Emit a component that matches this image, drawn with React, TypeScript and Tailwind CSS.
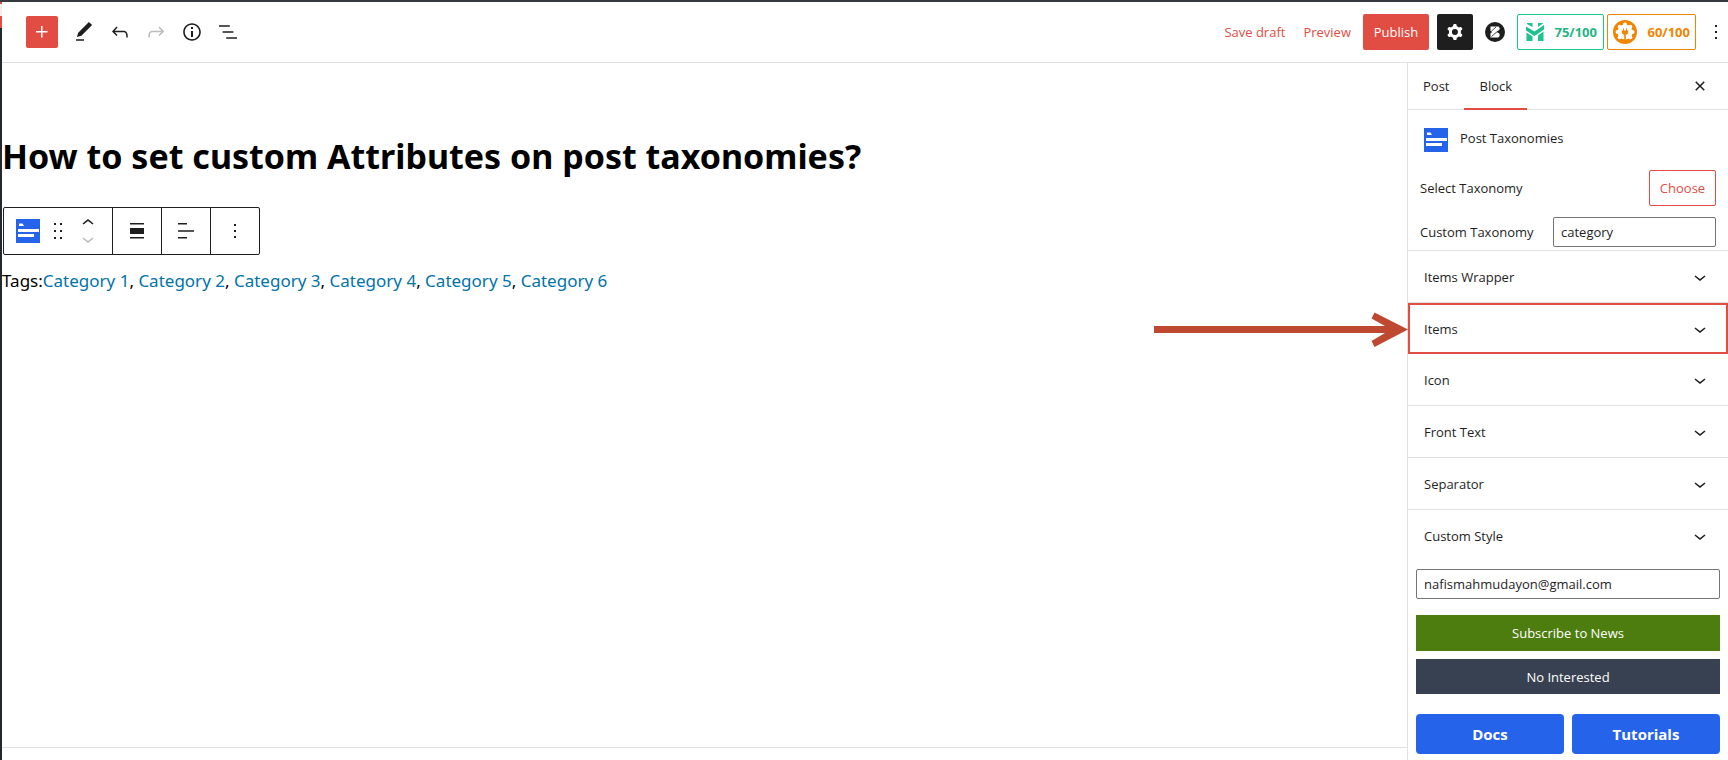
import React from 'react';

type IconProps = { d: string; className?: string };

const Icon = ({ d, className = 'size-6' }: IconProps) => (
  <svg viewBox="0 0 24 24" fill="currentColor" fillRule="evenodd" aria-hidden="true" className={`shrink-0 ${className}`}>
    <path d={d} />
  </svg>
);

const ICONS = {
  plus: 'M11 12.5V17.5H12.5V12.5H17.5V11H12.5V6H11V11H6V12.5H11Z',
  edit: 'M20.1 5.1L16.9 2 6.2 12.7l-1.3 4.4 4.5-1.3L20.1 5.1zM4 20.8h8v-1.5H4v1.5z',
  undo: 'M18.3 11.7c-.6-.6-1.4-.9-2.3-.9H6.7l2.9-3.3-1.1-1-4.5 5L8.5 16l1-1-2.7-2.7H16c.5 0 .9.2 1.3.5 1 1 1 3.4 1 4.5v.3h1.5v-.2c0-1.5 0-4.3-1.5-5.7z',
  redo: 'M15.6 6.5l-1.1 1 2.9 3.3H8c-.9 0-1.7.3-2.3.9-1.4 1.5-1.4 4.2-1.4 5.6v.2h1.5v-.3c0-1.1 0-3.5 1-4.5.3-.3.7-.5 1.3-.5h9.2L14.5 15l1.1 1.1 4.6-4.6-4.6-5z',
  info: 'M12 3.2c-4.8 0-8.8 3.9-8.8 8.8 0 4.8 3.9 8.8 8.8 8.8 4.8 0 8.8-3.9 8.8-8.8 0-4.8-4-8.8-8.8-8.8zm0 16c-4 0-7.2-3.3-7.2-7.2C4.8 8 8 4.8 12 4.8s7.2 3.3 7.2 7.2c0 4-3.2 7.2-7.2 7.2zM11 17h2v-6h-2v6zm0-8h2V7h-2v2z',
  list: 'M13.8 5.2H3v1.5h10.8V5.2zm-3.6 12v1.5H21v-1.5H10.2zm7.2-6H6.6v1.5h10.8v-1.5z',
  close: 'M12 13.06l3.712 3.713 1.061-1.06L13.061 12l3.712-3.712-1.06-1.06L12 10.938 8.288 7.227l-1.061 1.06L10.939 12l-3.712 3.712 1.06 1.061L12 13.061z',
  down: 'M17.5 11.6L12 16l-5.5-4.4.9-1.2L12 14l4.5-3.6 1 1.2z',
  up: 'M6.5 12.4L12 8l5.5 4.4-.9 1.2L12 10l-4.5 3.6-1-1.2z',
  drag: 'M8 6h2V4H8v2zm0 7h2v-2H8v2zm0 7h2v-2H8v2zm6-16v2h2V4h-2zm0 9h2v-2h-2v2zm0 7h2v-2h-2v2z',
  more: 'M13 19h-2v-2h2v2zm0-6h-2v-2h2v2zm0-6h-2V5h2v2z',
  width: 'M5 4h14v1.500H5zM5 9h14v6H5zM5 18h14v1.500H5z',
  align: 'M4 4h9v1.500H4zM4 11.200h16v1.500H4zM4 18h9v1.500H4z',
  cog: 'M10.289 4.836A1 1 0 0111.275 4h1.306a1 1 0 01.987.836l.244 1.466c.787.26 1.503.679 2.108 1.218l1.393-.522a1 1 0 011.216.437l.653 1.13a1 1 0 01-.23 1.273l-1.148.944a6.025 6.025 0 010 2.435l1.149.946a1 1 0 01.23 1.272l-.653 1.13a1 1 0 01-1.216.437l-1.394-.522c-.605.54-1.32.958-2.108 1.218l-.244 1.466a1 1 0 01-.987.836h-1.306a1 1 0 01-.986-.836l-.244-1.466a5.995 5.995 0 01-2.108-1.218l-1.394.522a1 1 0 01-1.217-.436l-.653-1.131a1 1 0 01.23-1.272l1.149-.946a6.026 6.026 0 010-2.435l-1.148-.944a1 1 0 01-.23-1.272l.653-1.131a1 1 0 011.217-.437l1.393.522a5.994 5.994 0 012.108-1.218l.244-1.466zM14.929 12a3 3 0 11-6 0 3 3 0 016 0z',
};

const BlockIcon = () => (
  <svg viewBox="0 0 24 24" aria-hidden="true" className="size-6 shrink-0">
    <path fill="#2563eb" d="M0 0h24v24H0z" />
    <path fill="#fff" d="M3 4.500h3.500L8 7H3zM2 10h21v3H2zM2 15h16v3H2z" />
  </svg>
);

const BuilderLogo = () => (
  <svg viewBox="0 0 20 20" aria-hidden="true" className="size-5 shrink-0">
    <circle cx="10" cy="10" r="10" fill="#1e1e1e" />
    <path fill="#fff" d="M5.500 4.500h7c2 0 2.800 2.200 1.600 3.700L11.800 10l2.400 1.400c1.200 1.700.2 4.100-2 4.100H5.500v-4.300L7.200 10 5.500 8.800z" />
    <path stroke="#1e1e1e" strokeWidth=".8" d="M6.500 9l4.500-4M6.500 14.500l7-6" />
  </svg>
);

const ScoreLogo = () => (
  <svg viewBox="0 0 18 18" fill="#1fc28a" aria-hidden="true" className="size-[18px] shrink-0">
    <path d="M1 0h5.500v4L1 1zM0 3.500l8.500 5L18 2v4.500L8.500 13 0 7.500zM.5 9.500l6 4V18h-6zM12 12.500l5.500-4V18H12zM12 0h5.500l-5.500 4z" />
  </svg>
);

const PlugLogo = () => (
  <svg viewBox="0 0 24 24" aria-hidden="true" className="size-6 shrink-0">
    <circle cx="12" cy="12" r="12" fill="#f18500" />
    <g fill="#fff">
      <circle cx="12" cy="12" r="7.500" />
      <circle cx="12" cy="4.500" r="2" />
      <circle cx="17.300" cy="6.700" r="2" />
      <circle cx="19.500" cy="12" r="2" />
      <circle cx="17.300" cy="17.300" r="2" />
      <circle cx="6.700" cy="17.300" r="2" />
      <circle cx="4.500" cy="12" r="2" />
      <circle cx="6.700" cy="6.700" r="2" />
    </g>
    <path fill="#f18500" d="M10 8.500h1v2h2v-2h1v2h1.200V12c0 1.500-.9 2.500-2.400 2.800V21h-1.600v-6.200c-1.500-.3-2.400-1.300-2.400-2.800v-1.500H10z" />
  </svg>
);

const IconButton = ({ label, d, className = '' }: IconProps & { label: string }) => (
  <button type="button" aria-label={label} className={`flex size-9 items-center justify-center ${className}`}>
    <Icon d={d} />
  </button>
);

const Header = () => (
  <header className="flex h-[61px] shrink-0 items-center justify-between border-b border-[#e0e0e0] pl-6">
    <div className="flex items-center">
      <button type="button" aria-label="Add block" className="mr-2 flex size-8 items-center justify-center rounded-xs bg-[#e14d43] text-white">
        <Icon d={ICONS.plus} />
      </button>
      <IconButton label="Tools" d={ICONS.edit} />
      <IconButton label="Undo" d={ICONS.undo} />
      <IconButton label="Redo" d={ICONS.redo} className="text-[#bbb]" />
      <IconButton label="Details" d={ICONS.info} />
      <IconButton label="List view" d={ICONS.list} />
    </div>
    <div className="flex items-center">
      <button type="button" className="mr-[18px] text-[#e14d43]">Save draft</button>
      <button type="button" className="mr-3 text-[#e14d43]">Preview</button>
      <button type="button" className="mr-2 h-9 w-[66px] rounded-xs bg-[#e14d43] text-white">Publish</button>
      <IconButton label="Settings" d={ICONS.cog} className="rounded-xs bg-[#1e1e1e] text-white" />
      <button type="button" aria-label="Page builder" className="mx-3 flex items-center">
        <BuilderLogo />
      </button>
      <button type="button" className="mr-[3px] flex h-9 w-[87px] items-center justify-between rounded-xs border border-[#1fc28a] pr-1.5 pl-2 font-bold text-[#1fb583]">
        <ScoreLogo />
        75/100
      </button>
      <button type="button" className="mr-2 flex h-9 w-[89px] items-center justify-between rounded-xs border border-[#f18500] px-[5px] font-bold text-[#f18500]">
        <PlugLogo />
        60/100
      </button>
      <button type="button" aria-label="Options" className="flex w-6 items-center justify-center">
        <Icon d={ICONS.more} />
      </button>
    </div>
  </header>
);

const BlockToolbar = () => (
  <div role="toolbar" aria-label="Block tools" className="ml-px flex h-12 w-fit divide-x divide-[#1e1e1e] rounded-xs border border-[#1e1e1e]">
    <div className="flex w-[109px] items-center pl-3">
      <button type="button" aria-label="Post Taxonomies">
        <BlockIcon />
      </button>
      <button type="button" aria-label="Drag" className="ml-1.5">
        <Icon d={ICONS.drag} />
      </button>
      <div className="ml-1.5 flex flex-col">
        <button type="button" aria-label="Move up" className="flex h-4 items-center">
          <Icon d={ICONS.up} />
        </button>
        <button type="button" aria-label="Move down" className="flex h-4 items-center text-[#bbb]">
          <Icon d={ICONS.down} />
        </button>
      </div>
    </div>
    <button type="button" aria-label="Width" className="flex w-[49px] items-center justify-center">
      <Icon d={ICONS.width} />
    </button>
    <button type="button" aria-label="Align text" className="flex w-[49px] items-center justify-center">
      <Icon d={ICONS.align} />
    </button>
    <button type="button" aria-label="More" className="flex w-12 items-center justify-center">
      <Icon d={ICONS.more} />
    </button>
  </div>
);

const CATEGORIES = ['Category 1', 'Category 2', 'Category 3', 'Category 4', 'Category 5', 'Category 6'];

const Editor = () => (
  <main className="flex min-w-0 flex-1 flex-col font-['Noto_Sans',sans-serif]">
    <div className="flex-1 border-b border-[#e0e0e0] pt-[68px]">
      <h1 className="text-[34px] leading-[50px] font-bold text-black">How to set custom Attributes on post taxonomies?</h1>
      <div className="mt-[26px]">
        <BlockToolbar />
      </div>
      <p className="mt-3 text-[17px] leading-7 text-black">
        Tags:
        {CATEGORIES.map((name, i) => (
          <React.Fragment key={name}>
            {i > 0 && ', '}
            <a href="#" className="text-[#0073aa]">{name}</a>
          </React.Fragment>
        ))}
      </p>
    </div>
    <div className="h-3" />
  </main>
);

const Arrow = () => (
  <svg viewBox="0 0 254 36" aria-hidden="true" className="pointer-events-none absolute top-2 right-full h-9 w-[254px]">
    <path fill="#bf4830" d="M0 15h231L217.500 7.500l3-6L254 18.500l-33.500 17.500-3-6 13.500-8H0z" />
  </svg>
);

const Panel = ({ title, highlighted = false, last = false }: { title: string; highlighted?: boolean; last?: boolean }) => (
  <div className={highlighted ? 'relative' : last ? '' : 'border-b border-[#e0e0e0]'}>
    <button
      type="button"
      className={
        highlighted
          ? 'flex h-[51px] w-full items-center justify-between border-2 border-[#e14d43] pr-3.5 pl-3.5 font-medium'
          : 'flex h-[51px] w-full items-center justify-between px-4 font-medium'
      }
    >
      {title}
      <Icon d={ICONS.down} />
    </button>
    {highlighted && <Arrow />}
  </div>
);

const Sidebar = () => (
  <aside className="w-[321px] shrink-0 border-l border-[#e0e0e0]">
    <div className="flex h-[47px] items-stretch border-b border-[#e0e0e0] pr-4">
      <button type="button" className="px-[15px] font-medium">Post</button>
      <button type="button" className="-mb-px border-b-2 border-[#e14d43] px-[15px]">Block</button>
      <button type="button" aria-label="Close settings" className="ml-auto">
        <Icon d={ICONS.close} />
      </button>
    </div>
    <div className="flex items-start gap-3 px-4 pt-[18px] font-medium">
      <BlockIcon />
      Post Taxonomies
    </div>
    <div className="flex items-center justify-between pt-[18px] pr-3 pl-3">
      Select Taxonomy
      <button type="button" className="h-9 w-[67px] rounded-xs border border-[#e14d43] text-[#e14d43]">Choose</button>
    </div>
    <div className="flex items-center justify-between border-b border-[#e0e0e0] pt-[11px] pr-3 pb-[3px] pl-3">
      <label htmlFor="taxonomy">Custom Taxonomy</label>
      <input id="taxonomy" type="text" defaultValue="category" className="h-[30px] w-[163px] rounded-xs border border-[#757575] px-[7px]" />
    </div>
    <Panel title="Items Wrapper" />
    <Panel title="Items" highlighted />
    <Panel title="Icon" />
    <Panel title="Front Text" />
    <Panel title="Separator" />
    <Panel title="Custom Style" last />
    <form className="flex flex-col px-2 pt-2 pb-1.5" onSubmit={(e) => e.preventDefault()}>
      <input type="email" aria-label="Email" defaultValue="nafismahmudayon@gmail.com" className="h-[30px] rounded-xs border border-[#757575] px-[7px]" />
      <button type="submit" className="mt-4 h-9 bg-[#4d7c0f] font-medium text-white">Subscribe to News</button>
      <button type="button" className="mt-2 h-[35px] bg-[#374151] font-medium text-white">No Interested</button>
      <div className="mt-5 grid grid-cols-2 gap-2 text-center text-[15px] leading-10 font-bold text-white">
        <a href="#" className="rounded-sm bg-[#2563eb]">Docs</a>
        <a href="#" className="rounded-sm bg-[#2563eb]">Tutorials</a>
      </div>
    </form>
  </aside>
);

const EdgeStrip = () => (
  <div aria-hidden="true" className="flex w-0.5 shrink-0 flex-col">
    <div className="h-0.5 bg-[#e14d43]" />
    <div className="h-3 bg-[#fbeceb]" />
    <div className="h-3 bg-[#e14d43]" />
    <div className="flex-1 bg-[#23282d]" />
  </div>
);

export default function App() {
  return (
    <div className="flex min-h-screen border-t-2 border-[#36393d] bg-white font-['Open_Sans','Noto_Sans',sans-serif] text-[13px] leading-5 text-[#1e1e1e]">
      <EdgeStrip />
      <div className="flex min-w-0 flex-1 flex-col">
        <Header />
        <div className="flex flex-1 items-stretch">
          <Editor />
          <Sidebar />
        </div>
      </div>
    </div>
  );
}
